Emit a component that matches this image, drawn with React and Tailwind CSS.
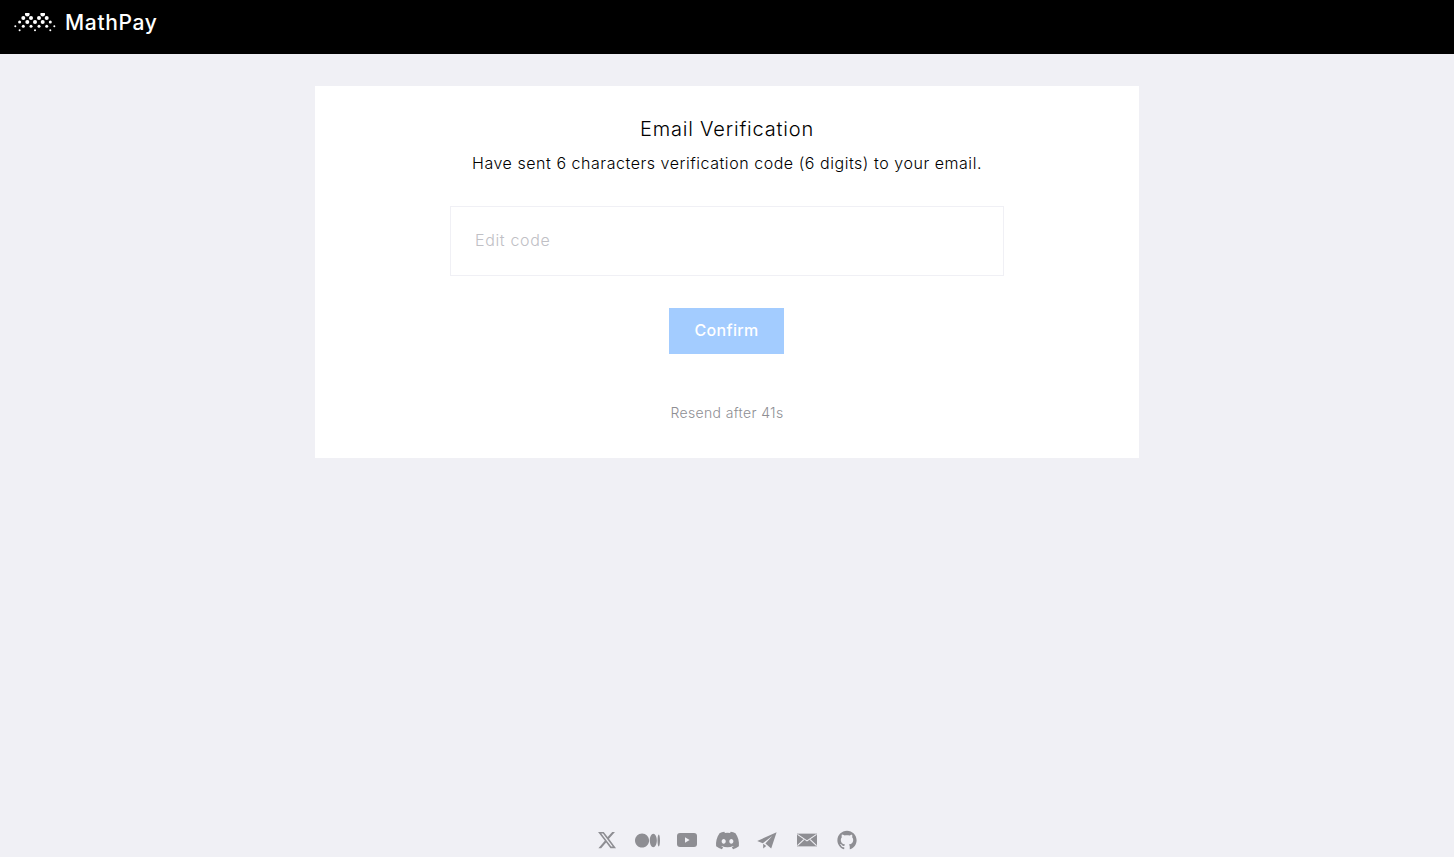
import React, { useState } from "react";
import { FaXTwitter, FaMedium, FaDiscord } from "react-icons/fa6";
import { AiOutlineGithub } from "react-icons/ai";

const big = [[27.3, 13.3], [42.7, 13.3]];
const mid = [[23.3, 17], [31, 17], [39, 17], [46.7, 17], [27.3, 21], [35, 21], [42.7, 21]];
const small = [[19.6, 21], [50.3, 21], [23.3, 25.3], [31, 25.3], [39, 25.3], [46.7, 25.3]];
const tiny = [[15.3, 25.3], [54.3, 25.3], [19.6, 29.3], [35, 29.3], [50.3, 29.3]];

const Logo = () => (
  <svg width="42" height="20" viewBox="14 12 42 20" fill="#fff">
    {big.map(([x, y]) => <circle key={x + "-" + y} cx={x} cy={y} r="2.3" />)}
    {mid.map(([x, y]) => <circle key={x + "-" + y} cx={x} cy={y} r="2" />)}
    {small.map(([x, y]) => <circle key={x + "-" + y} cx={x} cy={y} r="1.5" />)}
    {tiny.map(([x, y]) => <circle key={x + "-" + y} cx={x} cy={y} r="1" />)}
  </svg>
);

const MailIcon = () => (
  <svg width="22" height="14" viewBox="0 0 22 14">
    <path fill="#8e8e93" d="M0 0h22v14H0z" />
    <path fill="none" stroke="#f0f0f5" strokeWidth="1.2" d="M0.5 0.8 11 8l10.5-7.2M0.5 13.2 7.5 6.5M21.5 13.2 14.5 6.5" />
  </svg>
);

const YoutubeIcon = () => (
  <svg width="20" height="14" viewBox="0 0 20 14">
    <rect width="20" height="14" rx="3" fill="#8e8e93" />
    <path d="M8 4.2v5.6L12.6 7z" fill="#f0f0f5" />
  </svg>
);

const PlaneIcon = () => (
  <svg width="20" height="17" viewBox="0 0 20 17" fill="#8e8e93">
    <path d="M19.6 0.2 0.2 9l5.6 2.3L15.2 4 8.4 11.4l5.8 5.2z" />
    <path d="M6.2 11.8v4.8l3-2.6z" />
  </svg>
);

const App = () => {
  const [code, setCode] = useState("");

  return (
    <div className="flex h-[857px] flex-col overflow-hidden bg-[#f0f0f5] font-['Inter',sans-serif]">
      <header className="flex h-[54px] shrink-0 items-center gap-[9px] bg-black pb-[9px] pl-[14px]">
        <Logo />
        <span className="text-[21px] font-medium tracking-[0.65px] text-white">MathPay</span>
      </header>

      <main className="flex flex-1 justify-center pt-8">
        <div className="flex h-[372px] w-[824px] flex-col items-center bg-white pt-[29px]">
          <h1 className="text-[20px] leading-[28px] font-light tracking-[0.8px] text-black">Email Verification</h1>
          <p className="mt-2 text-[16px] leading-[24px] font-light tracking-[0.54px] text-black">
            Have sent 6 characters verification code (6 digits) to your email.
          </p>
          <input
            value={code}
            onChange={(e) => setCode(e.target.value)}
            placeholder="Edit code"
            className="mt-[31px] h-[70px] w-[554px] border border-[#f0f0f5] px-6 pb-[2px] text-[16px] font-light tracking-[0.65px] outline-none placeholder:text-[#c0c0c5]"
          />
          <button className="mt-8 -ml-px h-[46px] w-[115px] bg-[#a3ccff] pb-[2px] text-[16px] font-medium tracking-[0.3px] text-white">Confirm</button>
          <div className="mt-[50px] text-[14px] leading-[18px] font-[350] tracking-[0.35px] text-[#8e8e93]">Resend after 41s</div>
        </div>
      </main>

      <footer className="flex h-[34px] shrink-0 items-center justify-center gap-5 text-[#8e8e93]">
        <span className="flex w-5 justify-center"><FaXTwitter size={20} /></span>
        <span className="flex w-5 justify-center"><FaMedium size={25} className="shrink-0" /></span>
        <span className="flex w-5 justify-center"><YoutubeIcon /></span>
        <span className="flex w-5 justify-center"><FaDiscord size={25} className="shrink-0" /></span>
        <span className="flex w-5 justify-center"><PlaneIcon /></span>
        <span className="flex w-5 justify-center"><MailIcon /></span>
        <span className="flex w-5 justify-center"><AiOutlineGithub size={22} className="shrink-0" /></span>
      </footer>
    </div>
  );
};

export default App;
